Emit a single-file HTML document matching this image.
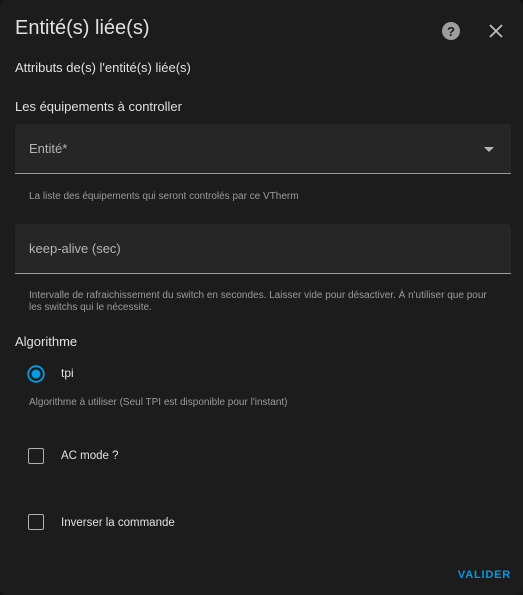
<!DOCTYPE html><html><head><style>
body{margin:0;width:523px;height:595px;background:#111;font-family:"Liberation Sans",sans-serif;overflow:hidden}
.d{position:absolute;left:0;top:0;width:523px;height:595px;background:#1c1c1c;border-radius:6px}
.t{position:absolute;white-space:nowrap;color:#e1e1e1}
.f{position:absolute;left:15px;width:496px;height:49px;background:#262626;border-bottom:1px solid #9a9a9a;border-radius:4px 4px 0 0}
.h{position:absolute;left:29px;font-size:10px;color:#9b9b9b;white-space:nowrap}
.cb{position:absolute;left:28px;width:14px;height:14px;border:1.5px solid #b0b0b0;border-radius:2px}
</style></head><body><div class="d">
<div class="t" style="left:15px;top:17px;font-size:20px">Entité(s) liée(s)</div>
<svg style="position:absolute;left:441px;top:21px" width="20" height="20" viewBox="0 0 20 20"><circle cx="10" cy="10" r="9" fill="#9e9e9e"/><text x="10" y="15" font-size="13" font-weight="bold" text-anchor="middle" fill="#1c1c1c" font-family="Liberation Sans">?</text></svg>
<svg style="position:absolute;left:489px;top:24px" width="14" height="14"><path d="M1 1L13 13M13 1L1 13" stroke="#bdbdbd" stroke-width="1.8"/></svg>
<div class="t" style="left:15px;top:60px;font-size:13px">Attributs de(s) l'entité(s) liée(s)</div>
<div class="t" style="left:15px;top:99px;font-size:13px">Les équipements à controller</div>
<div class="f" style="top:124px"></div>
<div class="t" style="left:29px;top:141px;font-size:13px;color:#b5b5b5">Entité*</div>
<svg style="position:absolute;left:484px;top:147px" width="10" height="5"><path d="M0 0H10L5 5Z" fill="#b5b5b5"/></svg>
<div class="h" style="top:191px">La liste des équipements qui seront controlés par ce VTherm</div>
<div class="f" style="top:224px"></div>
<div class="t" style="left:29px;top:241px;font-size:13px;color:#b5b5b5">keep-alive (sec)</div>
<div class="h" style="top:290px">Intervalle de rafraichissement du switch en secondes. Laisser vide pour désactiver. À n'utiliser que pour</div>
<div class="h" style="top:302px">les switchs qui le nécessite.</div>
<div class="t" style="left:15px;top:334px;font-size:13px">Algorithme</div>
<svg style="position:absolute;left:27px;top:365px" width="18" height="18"><circle cx="9" cy="9" r="7.8" fill="none" stroke="#039be5" stroke-width="1.8"/><circle cx="9" cy="9" r="4.5" fill="#039be5"/></svg>
<div class="t" style="left:61px;top:366px;font-size:12px">tpi</div>
<div class="h" style="top:397px">Algorithme à utiliser (Seul TPI est disponible pour l'instant)</div>
<div class="cb" style="top:448px"></div>
<div class="t" style="left:61px;top:450px;font-size:11.5px">AC mode ?</div>
<div class="cb" style="top:514px"></div>
<div class="t" style="left:61px;top:517px;font-size:11.5px">Inverser la commande</div>
<div class="t" style="right:12px;top:569px;font-size:11px;font-weight:bold;letter-spacing:0.8px;color:#039be5">VALIDER</div>
</div></body></html>
